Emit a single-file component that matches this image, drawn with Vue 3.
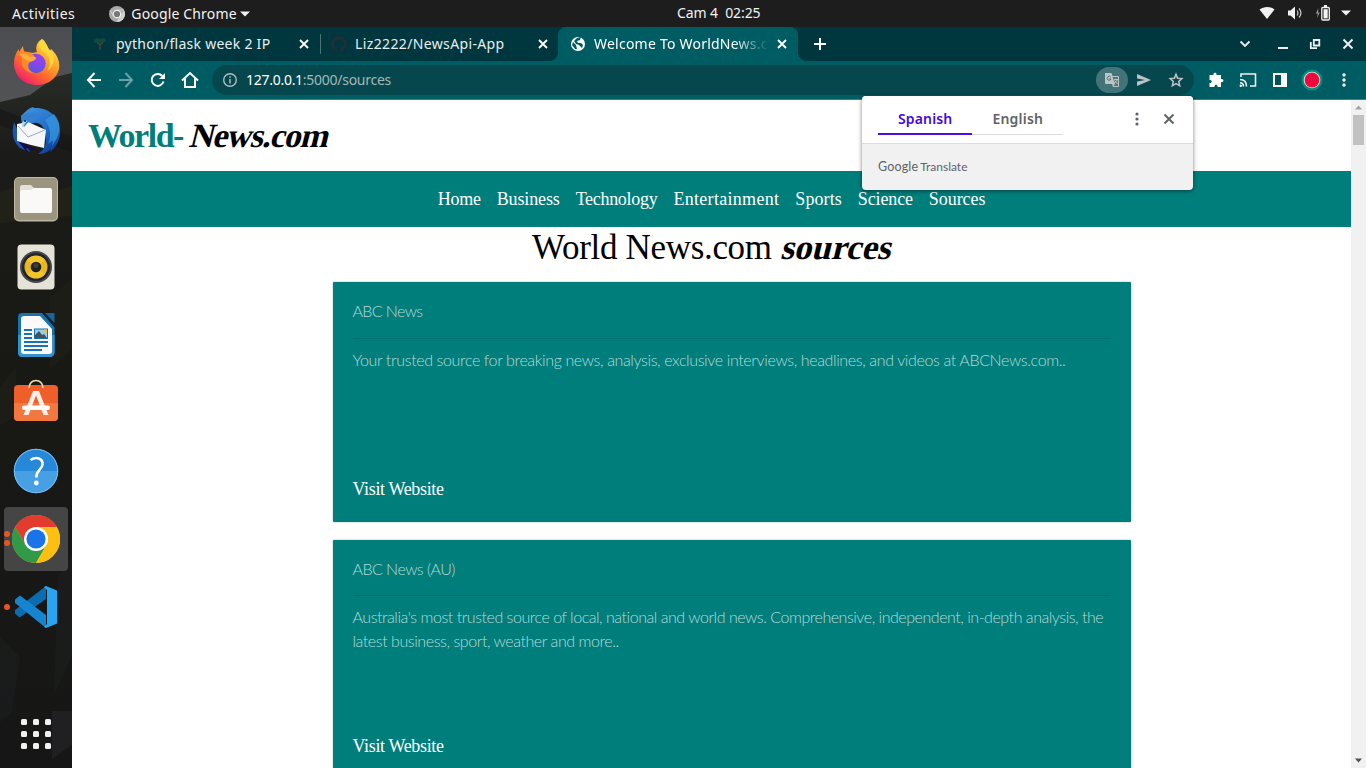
<script setup>
// Spreads a line of text over a given width by adjusting its tracking.
const vFit = {
  mounted(el, { value }) {
    const n = el.textContent.length
    const natural = el.offsetWidth
    el.style.letterSpacing = (value - natural) / n + 'px'
  },
}

const navLinks = [
  { label: 'Home', w: 43 },
  { label: 'Business', w: 63 },
  { label: 'Technology', w: 82 },
  { label: 'Entertainment', w: 106 },
  { label: 'Sports', w: 46.5 },
  { label: 'Science', w: 55 },
  { label: 'Sources', w: 56.5 },
]

const cards = [
  {
    name: 'ABC News',
    w: 70,
    lines: [
      {
        text: 'Your trusted source for breaking news, analysis, exclusive interviews, headlines, and videos at ABCNews.com..',
        w: 713,
      },
    ],
  },
  {
    name: 'ABC News (AU)',
    w: 102,
    lines: [
      {
        text: "Australia's most trusted source of local, national and world news. Comprehensive, independent, in-depth analysis, the",
        w: 751,
      },
      { text: 'latest business, sport, weather and more..', w: 266 },
    ],
  },
]
const gridDots = [0, 12, 24]
</script>

<template>
  <div class="desktop">
    <header class="topbar">
      <span v-fit="63" class="activities">Activities</span>
      <svg class="app-icon" width="16" height="16" viewBox="0 0 16 16">
        <circle cx="8" cy="8" r="8" fill="#a9a9a9" />
        <path d="M8 4h7M4.5 10L1 4M11.5 10L8 16" stroke="#d0d0d0" stroke-width="1" />
        <path d="M8 16l3.5-6L14.9 4A8 8 0 0 1 8 16z" fill="#d0d0d0" />
        <circle cx="8" cy="8" r="4.3" fill="#eee" />
        <circle cx="8" cy="8" r="3.1" fill="#777" />
      </svg>
      <span v-fit="105" class="app-name">Google Chrome</span>
      <svg class="caret" width="10" height="6"><path d="M0 .5h10L5 5.5z" fill="#f2f2f2" /></svg>
      <div class="clock"><span v-fit="84">Cam 4&nbsp; 02:25</span></div>
      <div class="tray">
        <svg width="16" height="14" viewBox="0 0 16 14"><path d="M.5 3.5C5 0 11 0 15.500 3.500L8 13z" fill="#f2f2f2" /></svg>
        <svg width="16" height="14" viewBox="0 0 16 14">
          <path d="M1 4.500h2.500L8 .5v13L3.500 9.500H1z" fill="#f2f2f2" />
          <path d="M10 4.500q2 2.500 0 5M12 2.500q4 4.500 0 9" fill="none" stroke="#ccc" stroke-width="1.200" />
        </svg>
        <svg width="16" height="16" viewBox="0 0 16 16">
          <path d="M3.500 3L.8 8.500h2L2 13l2.800-5.500H3z" fill="#999" />
          <path d="M9 1h3" stroke="#f2f2f2" stroke-width="2" />
          <rect x="6.800" y="2.500" width="7.500" height="12.500" rx="1" fill="none" stroke="#f2f2f2" stroke-width="1.300" />
          <rect x="8.500" y="4.200" width="4.200" height="9.200" fill="#f2f2f2" />
        </svg>
        <svg width="10" height="6"><path d="M0 .5h10L5 5.500z" fill="#f2f2f2" /></svg>
      </div>
    </header>

    <div class="body">
      <aside class="dock">
        <svg class="wallpaper" width="72" height="741" viewBox="0 0 72 741">
          <defs>
            <linearGradient id="sky" x1="0" y1="0" x2="0" y2="1"><stop offset="0" stop-color="#4c4d50" /><stop offset="1" stop-color="#555558" /></linearGradient>
            <linearGradient id="ground" x1="0" y1="0" x2="0" y2="1"><stop offset="0" stop-color="#282b26" /><stop offset=".12" stop-color="#1b1b19" /><stop offset=".3" stop-color="#191a15" /><stop offset="1" stop-color="#161616" /></linearGradient>
          </defs>
          <rect width="72" height="100" fill="url(#sky)" />
          <path d="M0 75L30 68 55 50 72 46V741H0z" fill="url(#ground)" />
          <path d="M0 82l72 28v16L0 98z" fill="#151515" opacity=".6" />
          <path d="M0 165l25-8 14 12 33-10v30L0 196z" fill="#27281a" opacity=".5" />
          <path d="M50 270l22-18v70l-22 20zM0 360l16-20v50l-16 8z" fill="#26291a" opacity=".3" />
          <path d="M0 610l20 20-8 55-12 10zM58 550l14-22v100l-18 40z" fill="#202529" opacity=".3" />
          <path d="M52 684h20v34l-20 14z" fill="#292a2d" opacity=".5" />
        </svg>

        <div class="slot">
          <svg width="48" height="48" viewBox="0 0 48 48">
            <defs>
              <linearGradient id="fx" x1=".9" y1="0" x2=".2" y2="1"><stop offset="0" stop-color="#fff44f" /><stop offset=".35" stop-color="#ffb02e" /><stop offset=".65" stop-color="#ff6a2b" /><stop offset="1" stop-color="#f0127a" /></linearGradient>
              <radialGradient id="fp" cx=".6" cy=".3" r=".8"><stop offset="0" stop-color="#a03df0" /><stop offset="1" stop-color="#4d5be0" /></radialGradient>
            </defs>
            <path d="M30 0c3 2 5 6 6 9l2 3 1-2c9 8 10 18 6 25-4 7-11 11-20 11C12 46 2 37 2 24c0-6 2-10 4-13l0-1c1 1 1 2 1 3l4-6c0 3 1 5 2 6 3 0 5 0 7 1l5-1c-2-5 0-10 5-13z" fill="url(#fx)" />
            <circle cx="24" cy="24.500" r="9.700" fill="url(#fp)" />
            <path d="M10 13c5-1 9 0 14 6-1 3-5 3-7 5-2 4 0 8 5 10-8 0-14-7-12-13z" fill="#ff8a25" />
            <path d="M7 15c5-1 9 0 11 3 3-1 5 0 6 1-1 3-5 4-9 3z" fill="#ffad3a" />
            <path d="M30 0c-5 6-2 11 3 14 6 5 6 12 2 18 8-5 9-15 2-22-2-3-4-8-7-10z" fill="#ffdb3c" opacity=".85" />
          </svg>
        </div>
        <div class="slot">
          <svg width="48" height="48" viewBox="0 0 48 48">
            <defs><linearGradient id="tb" x1=".2" y1="0" x2=".8" y2="1"><stop offset="0" stop-color="#3f91df" /><stop offset=".6" stop-color="#1c68c4" /><stop offset="1" stop-color="#113a98" /></linearGradient></defs>
            <path d="M2 15C-1 26 1 35 8 41l10 4-8-12z" fill="#1b56b5" />
            <path d="M5 33l9 11 3 2-3-5 14 3z" fill="#140c48" />
            <path d="M9 9C14 4 17 1 21 0l1 1C36 0 47 9 48 23c1 10-5 18-10 22l1-3c-4 4-9 5-13 5 8-5 9-12 7-21-1-7-6-11-11-10-4 1-7 0-9 4-1-4-4-5-4-11z" fill="url(#tb)" />
            <path d="M5 17l11-2 18 8-2 18-13-3-14-4z" fill="#f6f7f9" />
            <path d="M6 19l10 11 17-7" fill="none" stroke="#a3a7b2" stroke-width="1" />
            <path d="M9 10C15 4 23 4 27 10c-6 1-10 4-15 10-2-3-3-6-3-10z" fill="#3480cf" />
            <path d="M33 13l9-6c6 7 7 15 3 24l-5 8 1-6-5 4c4-9 2-17-3-24z" fill="#3795dd" opacity=".8" />
            <path d="M10 16c1-2 3-3 5-2l-5 7z" fill="#b5d5ed" /><circle cx="13" cy="14" r="1" fill="#08214f" />
          </svg>
        </div>
        <div class="slot">
          <svg width="48" height="48" viewBox="0 0 48 48">
            <rect x="2" y="2" width="44" height="44.500" rx="5" fill="#bdb7a4" /><rect x="3" y="3" width="42" height="42" rx="4" fill="#9b957f" />
            <path d="M8 12q0-2 2-2h9l3 3h8v14H8z" fill="#e5e0d5" />
            <path d="M8 17q0-2 2-2h9l3-2h16q2 0 2 2v21q0 2-2 2H10q-2 0-2-2z" fill="#faf9f7" />
          </svg>
        </div>
        <div class="slot">
          <svg width="48" height="48" viewBox="0 0 48 48">
            <rect x="5.500" y="1.500" width="37" height="45" rx="4" fill="#e5e2d7" />
            <circle cx="24" cy="24" r="16" fill="#45474d" /><circle cx="24" cy="24" r="14" fill="#22242a" />
            <circle cx="24" cy="24" r="11.500" fill="#eab61e" /><path d="M15 17a11.500 11.500 0 0 1 18 0l-9 7zM15 31a11.500 11.500 0 0 0 18 0l-9-7z" fill="#f9d236" opacity=".6" />
            <circle cx="24" cy="24" r="5.300" fill="#202022" /><circle cx="24" cy="22.500" r="2.500" fill="#3c3c3e" />
          </svg>
        </div>
        <div class="slot">
          <svg width="48" height="48" viewBox="0 0 48 48">
            <path d="M10 2h22l10.500 13v26q0 5-5 5H10q-4 0-4-5V6q0-4 4-4z" fill="#1673ad" /><path d="M6 24h36.500v17q0 5-5 5H10q-4 0-4-5z" fill="#3593cc" />
            <path d="M12 5h16l12 13v22q0 3-3 3H12q-3 0-3-3V8q0-3 3-3z" fill="#fafafa" />
            <path d="M30 2h4l9 10v5z" fill="#14202a" />
            <path d="M33 2h8.500q1 0 1 1v9z" fill="#19649a" />
            <path d="M12 19h8M12 23h8M12 27h8M12 31h24M12 35h24M12 39h18" stroke="#1873af" stroke-width="2" />
            <rect x="22.500" y="18" width="13" height="9.500" fill="#92cff2" stroke="#1873af" />
            <path d="M23 27v-3l4-4 3 4 2-1 3 4z" fill="#46525a" /><path d="M32 18.500h3v4q-3-1-3-4z" fill="#f5c229" />
          </svg>
        </div>
        <div class="slot">
          <svg width="48" height="48" viewBox="0 0 48 48">
            <rect x="2" y="6" width="44" height="36" rx="4" fill="#f05f29" /><path d="M2 24h44v14q0 4-4 4H6q-4 0-4-4z" fill="#f3783f" />
            <path d="M17 9c0-10 14-10 14 0" fill="none" stroke="#f6d9b0" stroke-width="1.600" />
            <path d="M21 12h6l9.500 24h-5L24 16.500 16.500 36h-5z" fill="#fcefe8" /><rect x="10" y="26.500" width="28" height="4.500" rx="2.200" fill="#fff" />
          </svg>
        </div>
        <div class="slot">
          <svg width="48" height="48" viewBox="0 0 48 48">
            <circle cx="24" cy="24" r="22.200" fill="#48a0e4" /><path d="M2.500 24a21.500 21.500 0 0 1 43 0z" fill="#2588d9" />
            <circle cx="24" cy="24" r="21.700" fill="none" stroke="#7bbdeb" />
            <path d="M18.500 13c6-4 12.500-1.500 12 4.500-.5 5-6.200 5.500-6.200 13" fill="none" stroke="#fff" stroke-width="2.600" /><circle cx="24.300" cy="36" r="2.400" fill="#fff" />
          </svg>
        </div>
        <div class="slot active">
          <i class="run"></i><i class="run low"></i>
          <svg width="48" height="48" viewBox="0 0 48 48">
            <circle cx="24" cy="24" r="24" fill="#fdc010" />
            <path d="M24 12h20.800A24 24 0 0 0 3.200 12L13.600 30z" fill="#e33b2e" />
            <path d="M3.200 12A24 24 0 0 0 24 48l10.400-18H13.600z" fill="#2f9a48" />
            <path d="M24 12h20.800A24 24 0 0 1 24 48l10.400-18z" fill="#fdc010" />
            <circle cx="24" cy="24" r="12" fill="#fff" /><circle cx="24" cy="24" r="9.600" fill="#1a73e8" />
          </svg>
        </div>
        <div class="slot">
          <i class="run mid"></i>
          <svg width="48" height="48" viewBox="0 0 48 48">
            <path d="M34 3v13L7.500 34.500 3 30.500v-3.500z" fill="#0b6cb0" />
            <path d="M3 16.500l5-4L34 32v13L3 20z" fill="#1684cf" />
            <path d="M34 3l11 4.500v33L34 45l-2-1 3-3V7l-3-3z" fill="#27a4f2" />
          </svg>
        </div>
        <svg class="apps" width="30" height="30">
          <template v-for="y in gridDots" :key="y"><rect v-for="x in gridDots" :key="x" :x="x" :y="y" width="6" height="6" rx="1.500" fill="#f0f0ee" /></template>
        </svg>
      </aside>

      <main class="browser">
        <div class="tabs">
          <div class="tab first">
            <svg width="16" height="16" viewBox="0 0 16 16"><path d="M2 4l3-2 3 1 4-1 2 3-2 1-3 0-1 1-3-1-3 1z" fill="#0d5541" opacity=".8" /><path d="M5 6l3 3v5M11 6L8 9" stroke="#4c4731" stroke-width="1.300" fill="none" /></svg>
            <span class="tab-label"><span v-fit="154">python/flask week 2 IP</span></span>
            <svg class="x" width="10" height="10"><path d="M1 1l8 8M9 1L1 9" stroke="#fff" stroke-width="1.900" /></svg>
          </div>
          <div class="tab second">
            <svg width="16" height="16" viewBox="0 0 16 16"><path fill="#252e38" d="M8 .3a8 8 0 0 0-2.500 15.600c.4.1.5-.2.500-.4v-1.500c-2.200.5-2.700-1-2.700-1-.4-.9-.9-1.200-.9-1.200-.7-.5.1-.5.1-.5.800.1 1.200.8 1.200.8.700 1.200 1.900.9 2.300.7.1-.5.3-.9.5-1.100-1.800-.2-3.600-.9-3.600-4 0-.9.300-1.600.8-2.100-.1-.2-.4-1 .1-2.100 0 0 .7-.2 2.200.8a7.500 7.500 0 0 1 4 0c1.500-1 2.200-.8 2.200-.8.400 1.100.2 1.900.1 2.100.5.600.8 1.300.8 2.100 0 3.100-1.900 3.700-3.700 3.900.3.300.6.800.6 1.500v2.300c0 .2.100.5.600.4A8 8 0 0 0 8 .3" /></svg>
            <span class="tab-label"><span v-fit="150">Liz2222/NewsApi-App</span></span>
            <svg class="x" width="10" height="10"><path d="M1 1l8 8M9 1L1 9" stroke="#fff" stroke-width="1.900" /></svg>
          </div>
          <div class="tab current">
            <svg width="16" height="16" viewBox="0 0 16 16"><circle cx="8" cy="8" r="7" fill="#fff" /><path d="M3 6l3 3 1 4-2 0-3-4zM7 2l4-1-1 3-3 1 1 2h3l2 2-1 3-3-3-3-1-2-3z" fill="#005c63" /></svg>
            <span class="tab-label fade"><span v-fit="174">Welcome To WorldNews.c</span></span>
            <svg class="x" width="10" height="10"><path d="M1 1l8 8M9 1L1 9" stroke="#fff" stroke-width="1.900" /></svg>
          </div>
          <svg class="plus" width="12" height="12"><path d="M6 0v12M0 6h12" stroke="#fff" stroke-width="2" /></svg>
          <div class="win">
            <svg width="12" height="12"><path d="M1.500 3.500L6 8l4.500-4.500" fill="none" stroke="#eee" stroke-width="1.800" /></svg>
            <svg width="12" height="12"><path d="M1 10h10" stroke="#eee" stroke-width="2" /></svg>
            <svg width="12" height="12"><path d="M4.800 2h5.500v5.500H4.800zM1.800 4v6.200H8" fill="none" stroke="#eee" stroke-width="1.800" /></svg>
            <svg width="12" height="12"><path d="M1.500 1.500l9 9M10.500 1.500l-9 9" stroke="#eee" stroke-width="2" /></svg>
          </div>
        </div>

        <div class="toolbar">
          <span class="tool"><svg width="16" height="16"><path d="M8.500 1L2 8l6.500 7M2 8h13" fill="none" stroke="#fff" stroke-width="2" /></svg></span>
          <span class="tool"><svg width="16" height="16"><path d="M7.500 1L14 8l-6.500 7M14 8H1" fill="none" stroke="#6ba0a4" stroke-width="2" /></svg></span>
          <span class="tool"><svg width="16" height="16"><path d="M13.500 9.500A6 6 0 1 1 12.300 4" fill="none" stroke="#fff" stroke-width="2" /><path d="M15 1v6H9z" fill="#fff" /></svg></span>
          <span class="tool"><svg width="18" height="18"><path d="M1 9.500L9 2l8 7.500M4 7.500V16h10V7.500" fill="none" stroke="#fff" stroke-width="2" /></svg></span>
          <div class="omni">
            <svg class="info" width="16" height="16"><circle cx="8" cy="8" r="6.300" fill="none" stroke="#aebfc1" stroke-width="1.400" /><path d="M8 7v4.500M8 4.300v1.500" stroke="#aebfc1" stroke-width="1.500" /></svg>
            <span v-fit="145" class="url"><b>127.0.0.1</b>:5000/sources</span>
            <span class="tool pill"><svg width="16" height="16" viewBox="0 0 16 16"><path d="M1 1h6.500l1 3H14q1 0 1 1v9q0 1-1 1H9l-1-3H2q-1 0-1-1z" fill="#bcc4c5" /><path d="M8.500 5H14v9H9.500l1.500-2z" fill="#54777b" /><path d="M6.800 5.200A2 2 0 1 0 7 7H5" fill="none" stroke="#56797c" stroke-width="1" /><path d="M10 7.500h4M13 7.500c0 2-2 3-3 4M10.500 8.500l3 3.500" fill="none" stroke="#bcc4c5" /></svg></span>
            <span class="tool"><svg width="16" height="14" viewBox="0 0 16 14"><path d="M1 1l14 6L1 13V8.500L9 7 1 5.500z" fill="#bdc3c4" /></svg></span>
            <span class="tool"><svg width="16" height="16" viewBox="0 0 16 16"><path d="M8 2.300l1.600 3.900 4.300.4-3.200 2.900 1 4.300L8 11.600l-3.700 2.200 1-4.300-3.200-2.900 4.300-.4z" fill="none" stroke="#bdc3c4" stroke-width="1.500" /></svg></span>
          </div>
          <div class="tools-right">
            <span class="tool"><svg width="16" height="16" viewBox="0 0 16 16"><path d="M2 3h3.500c-.8-3 3.800-3 3 0H13v4c3.200-.8 3.200 4 0 3v5H9.500c.5-3-3.500-3-3 0H1.500v-4c3 .5 3-3.500 0-3V3z" fill="#fff" /></svg></span>
            <span class="tool"><svg width="18" height="16" viewBox="0 0 18 16"><path d="M2 5V2h14.500v12H11M1 7.500q6.500 0 6.500 7M1 10.800q3.500 0 3.500 3.700" fill="none" stroke="#eef2f2" stroke-width="1.600" /><circle cx="1.800" cy="13.700" r="1.200" fill="#fff" /></svg></span>
            <span class="tool"><svg width="16" height="16"><path d="M2 2h8v12H2z" fill="#005158" stroke="#fff" stroke-width="2" /><path d="M9 1h6v14H9z" fill="#fff" /></svg></span>
            <span class="tool"><svg width="22" height="22"><circle cx="11" cy="11" r="10.500" fill="#088d7e" /><circle cx="11" cy="11" r="8.300" fill="#d9efe4" /><circle cx="11" cy="11" r="7.400" fill="#f4093e" /><path d="M7 9h1M11 7h1M14 9h1M8 13h1M12 14h1M11 11h1M15 12h1" stroke="#a20c34" /></svg></span>
            <span class="tool"><svg width="4" height="16"><circle cx="2" cy="3" r="1.700" fill="#fff" /><circle cx="2" cy="8" r="1.700" fill="#fff" /><circle cx="2" cy="13" r="1.700" fill="#fff" /></svg></span>
          </div>
        </div>

        <div class="viewport">
          <div class="page">
            <h1 class="brand"><span v-fit="95" class="world">World-</span><span v-fit="138" class="slant news">News.com</span></h1>
            <nav class="nav"><a v-for="l in navLinks" :key="l.label" v-fit="l.w">{{ l.label }}</a></nav>
            <h2 class="title"><span v-fit="239.500">World News.com</span><span v-fit="110" class="slant sources">sources</span></h2>
            <section class="cards">
              <article v-for="c in cards" :key="c.name" class="card">
                <div class="name"><span v-fit="c.w">{{ c.name }}</span></div>
                <div class="desc"><div v-for="l in c.lines" :key="l.text"><span v-fit="l.w">{{ l.text }}</span></div></div>
                <a v-fit="91.500" class="visit">Visit Website</a>
              </article>
            </section>
          </div>
          <div class="scroll">
            <svg width="15" height="15"><path d="M4 9.500h7L7.500 5.500z" fill="#a3a3a3" /></svg>
            <i class="thumb"></i>
            <svg class="down" width="15" height="15"><path d="M4 5.500h7L7.500 9.500z" fill="#505050" /></svg>
          </div>
        </div>
      </main>
    </div>

    <div class="popup">
      <div class="pop-head">
        <div class="lang on"><span v-fit="54">Spanish</span></div>
        <div class="lang"><span v-fit="50.500">English</span></div>
        <svg class="dots" width="4" height="14"><circle cx="2" cy="2" r="1.600" fill="#5f6368" /><circle cx="2" cy="7" r="1.600" fill="#5f6368" /><circle cx="2" cy="12" r="1.600" fill="#5f6368" /></svg>
        <svg width="12" height="12"><path d="M1.500 1.500l9 9M10.500 1.500l-9 9" stroke="#5f6368" stroke-width="2" /></svg>
      </div>
      <div class="pop-foot"><span v-fit="40" class="goog">Google</span><span v-fit="47">Translate</span></div>
    </div>
  </div>
</template>

<style>
html, body { overflow: hidden; }
</style>

<style scoped>
.desktop { position: relative; width: 1366px; height: 768px; display: flex; flex-direction: column; overflow: hidden; font-family: "Noto Sans", "Open Sans", sans-serif; font-size: 14px; }
svg { display: block; flex: none; }
span, a { white-space: nowrap; }
[class] { box-sizing: border-box; }
.topbar { position: relative; height: 27px; flex: none; display: flex; align-items: center; background: #1d1d1d; color: #f2f2f2; line-height: 27px; }
.activities { margin-left: 12px; margin-right: 34px; }
.app-icon { margin-right: 6px; }
.caret { margin-left: 3px; }
.clock { position: absolute; left: 677px; top: 0; line-height: 26px; }
.clock span { display: inline-block; }
.tray { margin-left: auto; margin-right: 15px; margin-bottom: 1px; display: flex; align-items: center; gap: 12px; }
.tray svg:last-child { margin-left: -2px; }
.body { flex: 1; display: flex; min-height: 0; }
.dock { position: relative; width: 72px; flex: none; padding-top: 2px; background: #181818; }
.wallpaper { position: absolute; left: 0; top: 0; }
.slot { position: relative; height: 68px; display: flex; align-items: center; justify-content: center; }
.slot.active { height: 64px; margin: 2px 4px; background: #454545; border-radius: 4px; }
.run { position: absolute; left: 0; top: 24px; width: 6px; height: 6px; border-radius: 3px; background: #e95420; }
.run.low { top: 33px; }
.run.mid { left: 4px; top: 31px; }
.apps { position: absolute; left: 21px; top: 692px; }
.browser { flex: 1; display: flex; flex-direction: column; min-width: 0; }
.tabs { height: 34px; flex: none; display: flex; align-items: center; background: #00363d; color: #e6efef; }
.tab { position: relative; height: 34px; display: flex; align-items: center; line-height: 34px; }
.tab-label { flex: 1; margin-left: 8px; }
.tab-label span { display: inline-block; }
.first { width: 248px; padding: 0 11px 0 20px; }
.first::after { content: ""; position: absolute; right: -1px; top: 7px; width: 1px; height: 20px; background: #4c7377; }
.second { width: 238px; padding: 0 10px 0 11px; }
.current { width: 240px; padding: 0 11px 0 12px; background: #005c63; border-radius: 8px 8px 0 0; color: #fff; }
.current::before, .current::after { content: ""; position: absolute; bottom: 0; width: 8px; height: 8px; }
.current::before { left: -8px; background: radial-gradient(circle at 0 0, transparent 7.500px, #005c63 8px); }
.current::after { right: -8px; background: radial-gradient(circle at 100% 0, transparent 7.500px, #005c63 8px); }
.fade { -webkit-mask-image: linear-gradient(90deg, #000 138px, transparent 175px); mask-image: linear-gradient(90deg, #000 138px, transparent 175px); }
.plus { margin-left: 16px; }
.win { margin-left: auto; margin-right: 12px; display: flex; gap: 20.600px; }
.win svg:first-child { margin-right: 5px; }
.toolbar { height: 39px; flex: none; display: flex; align-items: center; padding: 0 6px; background: #005c63; border-bottom: 1px solid #3a8186; }
.tool { width: 32px; height: 26px; display: flex; align-items: center; justify-content: center; }
.omni { width: 982px; height: 30px; margin-left: 6px; padding: 0 2px 0 10px; display: flex; align-items: center; border-radius: 15px; background: #06474d; color: #a1b9bb; }
.url { margin: 0 auto 0 8px; line-height: 30px; }
.url b { font-weight: 400; color: #fff; }
.pill { background: #42747a; border-radius: 13px; }
.tools-right { display: flex; margin-left: 6px; }
.viewport { flex: 1; display: flex; min-height: 0; background: #fff; }
.page { flex: 1; min-width: 0; overflow: hidden; font-family: "Liberation Serif", serif; }
.brand { height: 71px; margin: 0; padding-left: 16px; display: flex; line-height: 71px; font-size: 34px; font-weight: 700; color: #000; }
.world { color: #007e7b; }
.slant { display: inline-block; transform: skewX(-14deg); font-weight: 700; }
.news { margin-left: 8px; }
.nav { height: 56px; display: flex; justify-content: center; gap: 16px; line-height: 56px; background: #007e7b; color: #fff; font-size: 18px; }
.title { height: 55px; margin: 0; display: flex; justify-content: center; line-height: 41px; font-size: 35px; font-weight: 400; color: #000; }
.sources { margin-left: 9px; }
.cards { width: 798px; margin-left: 261px; }
.card { height: 240px; margin-bottom: 18px; padding: 0 20px 0 19.500px; background: #007e7b; border-radius: 1px; box-shadow: 0 0 2px rgba(0, 0, 0, .35); color: #b4dad8; font-family: Lato, sans-serif; font-weight: 300; font-size: 16px; display: flex; flex-direction: column; }
.name { height: 57px; line-height: 57px; border-bottom: 1px solid #006f6e; flex: none; }
.card + .card .name { height: 56px; }
.desc { flex: 1; padding-top: 9px; line-height: 24px; }
.name span, .desc span { display: inline-block; }
.visit { align-self: flex-start; height: 47px; line-height: 28px; color: #fff; font-family: "Liberation Serif", serif; font-size: 18px; font-weight: 400; }
.card + .card .visit { height: 48px; }
.scroll { width: 15px; display: flex; flex-direction: column; background: #f1f1f1; }
.thumb { width: 11px; height: 30px; margin-left: 2px; background: #c1c1c1; }
.down { margin-top: auto; }
.popup { position: absolute; left: 862px; top: 96px; width: 331px; height: 94px; background: #f1f1f1; border-radius: 4px; overflow: hidden; box-shadow: 0 1px 4px rgba(0, 0, 0, .5); color: #5f6368; }
.pop-head { height: 48px; padding: 0 18px 2px 16px; display: flex; align-items: center; background: #fff; border-bottom: 1px solid #dadce0; }
.lang { height: 32px; padding: 0 20px; line-height: 32px; font-weight: 600; border-bottom: 1px solid #dadce0; }
.lang.on { color: #4508e0; border-bottom: 2px solid #4b0be8; }
.lang span { display: inline-block; }
.dots { margin-left: auto; margin-right: 24px; }
.pop-foot { height: 46px; padding-left: 16px; display: flex; line-height: 46px; font-family: Lato, sans-serif; font-size: 12px; }
.goog { margin-right: 2px; font-size: 12.500px; }
</style>
